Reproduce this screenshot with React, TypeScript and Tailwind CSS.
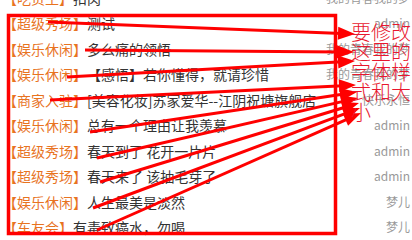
import React from "react";

const rows = [
  { cat: "吃货王", title: "扣肉", by: "我的青春我的梦" },
  { cat: "超级秀场", title: "测试", by: "admin" },
  { cat: "娱乐休闲", title: "多么痛的领悟", by: "我的青春我的梦" },
  { cat: "娱乐休闲", title: "【感悟】若你懂得，就请珍惜", by: "我的青春我的梦" },
  { cat: "商家入驻", title: "[美容化妆]苏家爱华--江阴祝塘旗舰店", by: "快乐永恒" },
  { cat: "娱乐休闲", title: "总有一个理由让我羡慕", by: "admin" },
  { cat: "超级秀场", title: "春天到了 花开一片片", by: "admin" },
  { cat: "超级秀场", title: "春天来了 该抽毛芽了", by: "admin" },
  { cat: "娱乐休闲", title: "人生最美是淡然", by: "梦儿" },
  { cat: "车友会", title: "有毒致癌水，勿喝", by: "梦儿" },
];

// [x1, y1, tipX, tipY]
const arrows: [number, number, number, number][] = [
  [48, 22, 355, 34],
  [85, 50, 354, 52],
  [67, 77, 355, 61],
  [50, 100, 356, 85],
  [90, 132, 357, 92],
  [97, 158, 358, 98],
  [100, 182, 359, 103],
  [93, 208, 360, 108],
  [97, 230, 361, 113],
];

function Arrow({ a }: { a: [number, number, number, number] }) {
  const [x1, y1, x2, y2] = a;
  const dx = x2 - x1;
  const dy = y2 - y1;
  const len = Math.hypot(dx, dy);
  const ux = dx / len;
  const uy = dy / len;
  const bx = x2 - ux * 17;
  const by = y2 - uy * 17;
  const px = -uy * 6.5;
  const py = ux * 6.5;
  return (
    <g>
      <line x1={x1} y1={y1} x2={bx + ux * 4} y2={by + uy * 4} stroke="#f00" strokeWidth={3} />
      <polygon
        points={`${x2},${y2} ${bx + px},${by + py} ${bx - px},${by - py}`}
        fill="#f00"
      />
    </g>
  );
}

export default function App() {
  return (
    <div className="relative w-[412px] h-[240px] overflow-hidden bg-white font-['Noto_Sans_CJK_SC',sans-serif]">
      <ul className="-mt-[15px]">
        {rows.map((r, i) => (
          <li key={i} className="flex items-center justify-between h-[25.5px] pl-[3px] pr-[2px] whitespace-nowrap">
            <div className="flex items-center text-[14px] leading-none">
              <span className="text-[#e8731f]">【{r.cat}】</span>
              <span className="text-[#333]">{r.title}</span>
            </div>
            <span className="text-[12px] leading-none text-[#999]">{r.by}</span>
          </li>
        ))}
      </ul>

      <svg className="absolute left-0 top-0" width={412} height={240} viewBox="0 0 412 240">
        <rect x={8.5} y={15.5} width={327} height={218} fill="none" stroke="#f00" strokeWidth={3.5} />
        {arrows.map((a, i) => (
          <Arrow key={i} a={a} />
        ))}
      </svg>

      <div className="absolute left-[351px] top-[22px] w-[62px] text-[20px] leading-[20px] font-light text-[#e8172e]">
        要修改这里的字体样式和大小
      </div>
    </div>
  );
}
